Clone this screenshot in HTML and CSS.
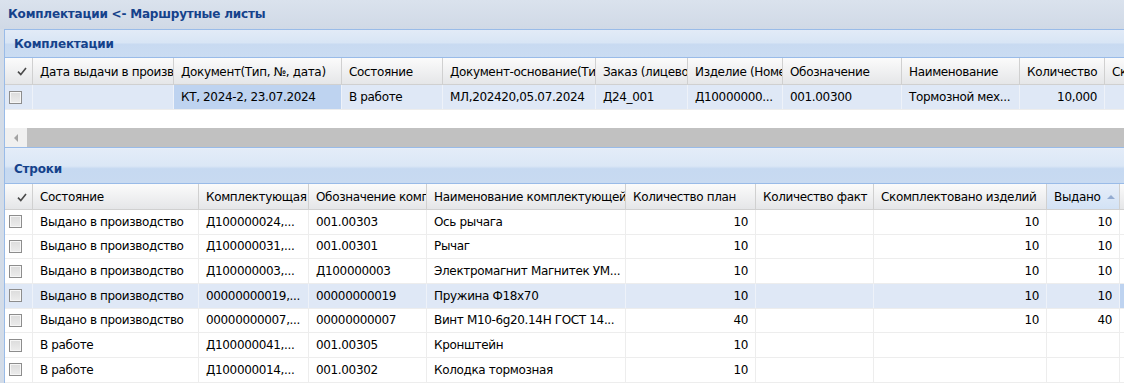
FILE: index.html
```html
<!DOCTYPE html>
<html lang="ru">
<head>
    <meta charset="UTF-8">
    <title>Комплектации</title>
    <link rel="stylesheet" href="styles.css">
</head>
<body>
    <div class="window-title">Комплектации &lt;- Маршрутные листы</div>

    <div class="panel">
        <div class="panel-header">Комплектации</div>
        <div class="grid grid-top">
            <div class="grid-row grid-head">
                <div class="cell check-cell"><svg width="10" height="9" viewBox="0 0 10 9"><path d="M1 4.6 L3.8 7.6 L9 1" fill="none" stroke="#4a4a4a" stroke-width="1.6"/></svg></div>
                <div class="cell">Дата выдачи в производство</div>
                <div class="cell">Документ(Тип, №, дата)</div>
                <div class="cell">Состояние</div>
                <div class="cell">Документ-основание(Тип, №, дата)</div>
                <div class="cell">Заказ (лицевой счет)</div>
                <div class="cell">Изделие (Номенклатура)</div>
                <div class="cell">Обозначение</div>
                <div class="cell">Наименование</div>
                <div class="cell">Количество</div>
                <div class="cell">Скомплектовано</div>
            </div>
            <div class="grid-body">
                <div class="grid-row selected">
                    <div class="cell check-cell"><span class="checkbox"></span></div>
                    <div class="cell"></div>
                    <div class="cell focused">КТ, 2024-2, 23.07.2024</div>
                    <div class="cell">В работе</div>
                    <div class="cell">МЛ,202420,05.07.2024</div>
                    <div class="cell">Д24_001</div>
                    <div class="cell">Д10000000...</div>
                    <div class="cell">001.00300</div>
                    <div class="cell">Тормозной мех...</div>
                    <div class="cell num">10,000</div>
                    <div class="cell"></div>
                </div>
            </div>
            <div class="hscroll">
                <div class="scroll-btn"><span class="arrow-left"></span></div>
            </div>
        </div>
    </div>

    <div class="panel panel-lines">
        <div class="panel-header">Строки</div>
        <div class="grid grid-lines">
            <div class="grid-row grid-head">
                <div class="cell check-cell"><svg width="10" height="9" viewBox="0 0 10 9"><path d="M1 4.6 L3.8 7.6 L9 1" fill="none" stroke="#4a4a4a" stroke-width="1.6"/></svg></div>
                <div class="cell">Состояние</div>
                <div class="cell">Комплектующая</div>
                <div class="cell">Обозначение комплектующей</div>
                <div class="cell">Наименование комплектующей</div>
                <div class="cell">Количество план</div>
                <div class="cell">Количество факт</div>
                <div class="cell">Скомплектовано изделий</div>
                <div class="cell sorted">Выдано <span class="sort-up"></span></div>
                <div class="cell"></div>
            </div>
            <div id="linesBody"></div>
        </div>
    </div>

    <script>
    const lines = [
        ['Выдано в производство', 'Д100000024,...', '001.00303', 'Ось рычага', '10', '', '10', '10'],
        ['Выдано в производство', 'Д100000031,...', '001.00301', 'Рычаг', '10', '', '10', '10'],
        ['Выдано в производство', 'Д100000003,...', 'Д100000003', 'Электромагнит Магнитек УМ...', '10', '', '10', '10'],
        ['Выдано в производство', '00000000019,...', '00000000019', 'Пружина Ф18х70', '10', '', '10', '10'],
        ['Выдано в производство', '00000000007,...', '00000000007', 'Винт М10-6g20.14H ГОСТ 14...', '40', '', '10', '40'],
        ['В работе', 'Д100000041,...', '001.00305', 'Кронштейн', '10', '', '', ''],
        ['В работе', 'Д100000014,...', '001.00302', 'Колодка тормозная', '10', '', '', '']
    ];

    function renderLines() {
        const body = document.getElementById('linesBody');
        lines.forEach((line, index) => {
            const row = document.createElement('div');
            row.className = 'grid-row' + (index === 3 ? ' selected' : '');
            row.innerHTML = `
                <div class="cell check-cell"><span class="checkbox"></span></div>
                <div class="cell">${line[0]}</div>
                <div class="cell">${line[1]}</div>
                <div class="cell">${line[2]}</div>
                <div class="cell">${line[3]}</div>
                <div class="cell num">${line[4]}</div>
                <div class="cell num">${line[5]}</div>
                <div class="cell num">${line[6]}</div>
                <div class="cell num">${line[7]}</div>
                <div class="cell${index === 3 ? ' focused' : ''}"></div>
            `;
            body.appendChild(row);
        });
    }

    renderLines();
    </script>
</body>
</html>
```

FILE: styles.css
```css
body {
    margin: 0;
    background-color: #d3dce8;
    font-family: "DejaVu Sans", sans-serif;
    font-size: 12px;
    letter-spacing: -0.35px;
    color: #000;
    overflow: hidden;
}

.window-title {
    height: 29px;
    line-height: 28px;
    padding-left: 8px;
    font-weight: bold;
    letter-spacing: -0.2px;
    color: #15428b;
    background: linear-gradient(to bottom, #dae2ed, #d0d9e6);
}

.panel {
    margin-left: 4px;
    border-left: 1px solid #99bbe8;
    border-top: 1px solid #99bbe8;
    background-color: white;
    overflow: hidden;
}

.panel-header {
    height: 27px;
    line-height: 28px;
    padding-left: 9px;
    font-weight: bold;
    letter-spacing: -0.2px;
    color: #15428b;
    border-bottom: 1px solid #99bbe8;
    background: linear-gradient(to bottom, #e2ebf7 0%, #d8e5f5 48%, #c8daf1 52%, #cadcf2 100%);
}

.panel-lines .panel-header {
    height: 34px;
    line-height: 40px;
    border-top: 1px solid #e6eef9;
    background: linear-gradient(to bottom, #e3ecf8 0%, #dbe7f6 50%, #c6d9f1 58%, #c8daf1 100%);
}

.grid-row {
    display: grid;
    height: 25px;
    box-sizing: border-box;
    border-bottom: 1px solid #ededed;
    white-space: nowrap;
}

.grid-top .grid-row {
    grid-template-columns: 28px 141px 168px 101px 153px 92px 95px 119px 118px 85px 100px;
}

.grid-lines .grid-row {
    grid-template-columns: 28px 166px 110px 118px 199px 130px 118px 173px 73px 80px;
    height: 24.67px;
}

.grid-lines .grid-row.grid-head {
    height: 26px;
}

.cell {
    display: flex;
    align-items: center;
    padding: 0 7px;
    overflow: hidden;
    border-right: 1px solid #ededed;
}

.cell.num {
    justify-content: flex-end;
}

.grid-head {
    height: 27px;
    border-bottom: 1px solid #d0d0d0;
    background: linear-gradient(to bottom, #fbfbfb, #e5e6e8);
}

.grid-head .cell {
    border-right: 1px solid #d0d0d0;
    padding-top: 1px;
}

.grid-head .check-cell {
    padding-left: 12px;
}

.grid-head .sorted {
    background: linear-gradient(to bottom, #e6eef9, #d3e2f5);
}

.sort-up {
    margin-left: 7px;
    width: 0;
    height: 0;
    border-left: 4px solid transparent;
    border-right: 4px solid transparent;
    border-bottom: 4px solid #93abd1;
}

.check-cell {
    padding: 0 0 0 4px;
}

.checkbox {
    width: 11px;
    height: 11px;
    border: 1px solid #8d8d8d;
    background: linear-gradient(to bottom, #dcdcdc, #ececec);
    box-shadow: inset 0 0 0 1px #f6f6f6;
}

.selected {
    background-color: #dfe8f6;
}

.selected .cell {
    border-right-color: #eef2f9;
}

.cell.focused {
    background-color: #bed3f0;
}

.grid-body {
    height: 43px;
}

.hscroll {
    height: 19px;
    background-color: #c1c1c1;
}

.scroll-btn {
    width: 22px;
    height: 19px;
    background-color: #f0f0f0;
    display: flex;
    align-items: center;
    justify-content: center;
}

.arrow-left {
    width: 0;
    height: 0;
    border-top: 4px solid transparent;
    border-bottom: 4px solid transparent;
    border-right: 4px solid #a3a3a3;
}
```
